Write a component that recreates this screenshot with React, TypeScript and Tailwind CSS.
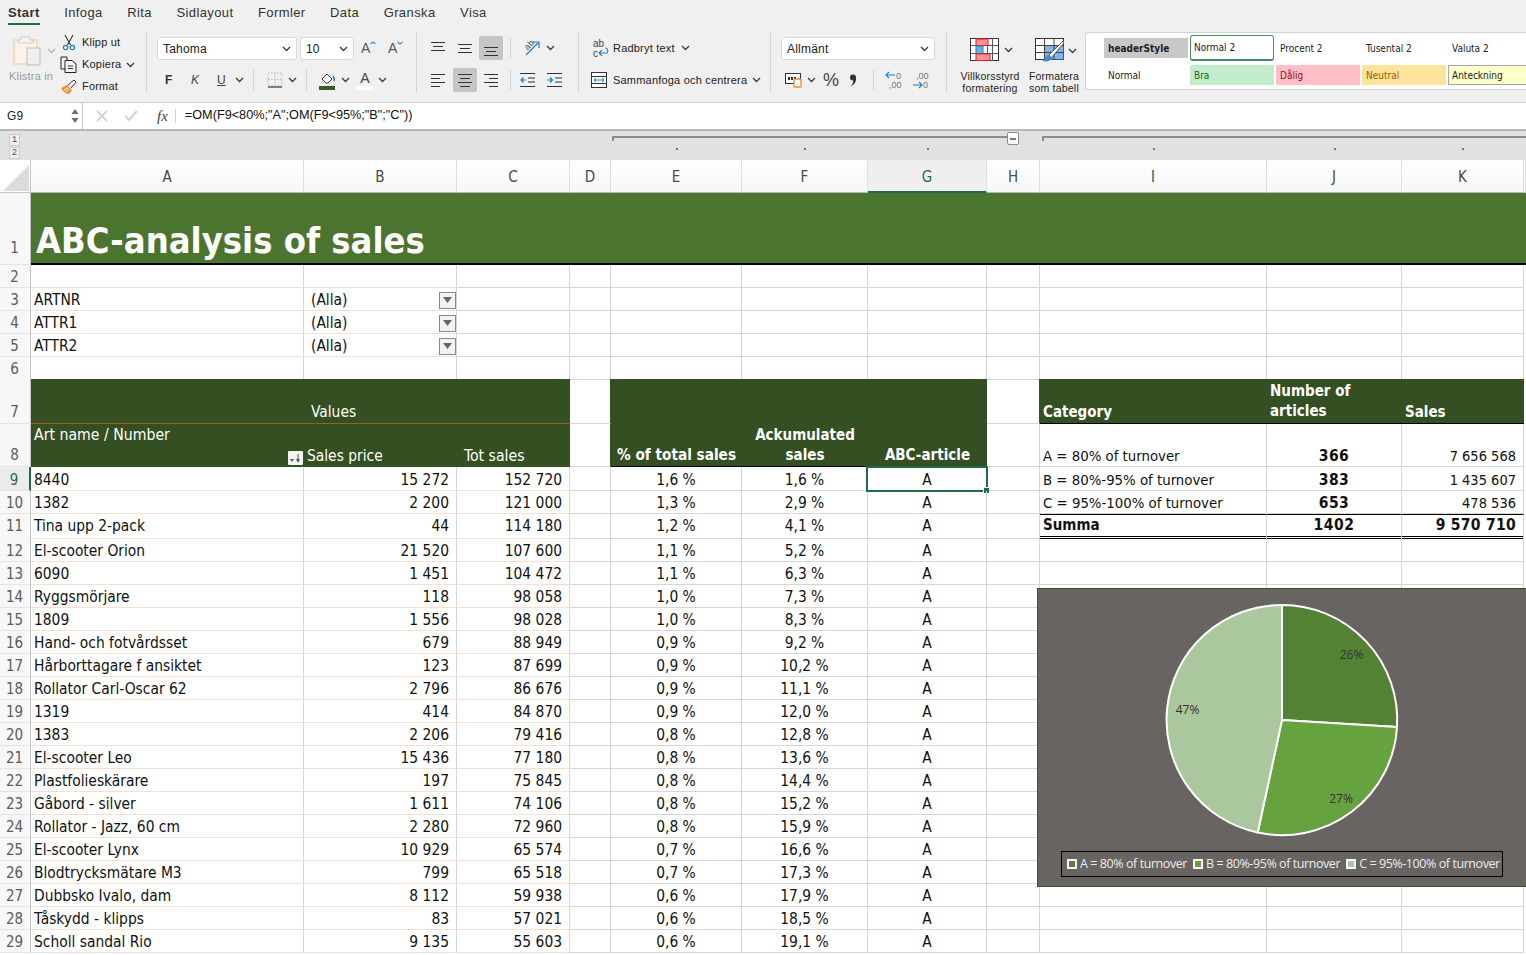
import React from "react";

const COLS = "grid grid-cols-[31px_273px_153px_113px_41px_131px_126px_119px_53px_227px_135px_122px_2px]";
const CELLFONT = "font-['DejaVu_Sans_Condensed','Noto_Sans',sans-serif] text-[15.4px] leading-[20px] text-[#111]";
const UIF = "font-['Liberation_Sans',sans-serif] tracking-[0.2px]";
const UI = `${UIF} text-[#222]`;
const GRID = "border-r border-b border-[#d6d6d6]";
const PEACH = "border-r border-b border-r-[#d6d6d6] border-b-[#f8dfcd]";
const DARK = "bg-[#344f22]";
const HEAD = "text-white font-bold text-[15px]";

const data: [string, string, string, string, string][] = [
  ["8440", "15 272", "152 720", "1,6 %", "1,6 %"],
  ["1382", "2 200", "121 000", "1,3 %", "2,9 %"],
  ["Tina upp 2-pack", "44", "114 180", "1,2 %", "4,1 %"],
  ["El-scooter Orion", "21 520", "107 600", "1,1 %", "5,2 %"],
  ["6090", "1 451", "104 472", "1,1 %", "6,3 %"],
  ["Ryggsmörjare", "118", "98 058", "1,0 %", "7,3 %"],
  ["1809", "1 556", "98 028", "1,0 %", "8,3 %"],
  ["Hand- och fotvårdsset", "679", "88 949", "0,9 %", "9,2 %"],
  ["Hårborttagare f ansiktet", "123", "87 699", "0,9 %", "10,2 %"],
  ["Rollator Carl-Oscar 62", "2 796", "86 676", "0,9 %", "11,1 %"],
  ["1319", "414", "84 870", "0,9 %", "12,0 %"],
  ["1383", "2 206", "79 416", "0,8 %", "12,8 %"],
  ["El-scooter Leo", "15 436", "77 180", "0,8 %", "13,6 %"],
  ["Plastfolieskärare", "197", "75 845", "0,8 %", "14,4 %"],
  ["Gåbord - silver", "1 611", "74 106", "0,8 %", "15,2 %"],
  ["Rollator - Jazz, 60 cm", "2 280", "72 960", "0,8 %", "15,9 %"],
  ["El-scooter Lynx", "10 929", "65 574", "0,7 %", "16,6 %"],
  ["Blodtrycksmätare M3", "799", "65 518", "0,7 %", "17,3 %"],
  ["Dubbsko Ivalo, dam", "8 112", "59 938", "0,6 %", "17,9 %"],
  ["Tåskydd - klipps", "83", "57 021", "0,6 %", "18,5 %"],
  ["Scholl sandal Rio", "9 135", "55 603", "0,6 %", "19,1 %"],
];

const rightTable: Record<number, [string, string, string, boolean]> = {
  9: ["B = 80%-95% of turnover", "383", "1 435 607", false],
  10: ["C = 95%-100% of turnover", "653", "478 536", false],
  11: ["Summa", "1402", "9 570 710", true],
};

function Cell({ c = "", children }: { c?: string; children?: React.ReactNode }) {
  return <div className={`min-w-0 flex whitespace-nowrap ${c}`}>{children}</div>;
}

function RowNum({ n, pos = "items-center pt-[2px]", sel }: { n: number; pos?: string; sel?: boolean }) {
  return (
    <div
      className={`flex justify-center pr-[1px] border-b border-b-[#e4e4e4] font-['DejaVu_Sans_Condensed',sans-serif] text-[15px] ${pos} ${
        sel ? "bg-[#ececec] border-r-2 border-r-[#1f6b45] text-[#1f6b45]" : "bg-[#f7f7f7] border-r border-r-[#c4c4c4] text-[#5c5c5c]"
      }`}
    >
      {n}
    </div>
  );
}

function Chev({ dim }: { dim?: boolean }) {
  return (
    <svg width="9" height="6" viewBox="0 0 9 6" className="shrink-0">
      <path d="M1 1l3.5 3.5L8 1" fill="none" stroke={dim ? "#b5b5b5" : "#3a3a3a"} strokeWidth="1.3" />
    </svg>
  );
}

function Sep({ c = "h-[61px] mt-[6px]" }: { c?: string }) {
  return <div className={`w-px shrink-0 bg-[#d4d4d4] ${c}`} />;
}

function Lines({ kind }: { kind: "top" | "mid" | "bot" | "left" | "center" | "right" }) {
  const y = kind === "top" ? [2, 6, 10] : kind === "mid" ? [4, 8, 12] : kind === "bot" ? [7, 11, 15] : [2, 6, 10, 14];
  const x: [number, number][] =
    kind === "left"
      ? [[0, 14], [0, 9], [0, 14], [0, 9]]
      : kind === "center"
      ? [[0, 14], [2, 12], [0, 14], [2, 12]]
      : kind === "right"
      ? [[0, 14], [5, 14], [0, 14], [5, 14]]
      : [[0, 14], [2, 12], [0, 14]];
  return (
    <svg width="14" height="16" viewBox="0 0 14 16">
      {y.map((v, i) => (
        <path key={i} d={`M${x[i][0]} ${v + 0.5}H${x[i][1]}`} stroke="#333" strokeWidth="1" />
      ))}
    </svg>
  );
}

function ClipIcon() {
  return (
    <svg width="30" height="32" viewBox="0 0 30 32">
      <rect x="1" y="5" width="23" height="24" fill="#fbf3e9" stroke="#f0d8b8" strokeWidth="1.6" />
      <path d="M8 5V2h9v3h3v3H5V5z" fill="#f4f4f4" stroke="#cfcfcf" />
      <rect x="14" y="13" width="13" height="17" fill="#f0f0f0" stroke="#bdbdbd" />
    </svg>
  );
}

function Scissors() {
  return (
    <svg width="14" height="17" viewBox="0 0 14 17">
      <path d="M3 1l5.5 10M11 1L5.5 11" stroke="#333" strokeWidth="1.1" fill="none" />
      <circle cx="3.6" cy="13.5" r="2.2" fill="none" stroke="#1f7fc4" strokeWidth="1.2" />
      <circle cx="10.4" cy="13.5" r="2.2" fill="none" stroke="#1f7fc4" strokeWidth="1.2" />
    </svg>
  );
}

function CopyIcon() {
  return (
    <svg width="17" height="17" viewBox="0 0 17 17">
      <path d="M1 1h6v12H1z" fill="none" stroke="#222" />
      <path d="M5 4.5h7l4 3.5v8.5H5z" fill="#f4f4f4" stroke="#222" />
      <path d="M8 10h5M8 12.5h5" stroke="#333" />
    </svg>
  );
}

function BrushIcon() {
  return (
    <svg width="18" height="16" viewBox="0 0 18 16">
      <path d="M1 9l6-3 5 5-3 4c-2 0-6-2-8-6z" fill="#f0913a" />
      <path d="M7.5 6.5L14 1l2 2-5 6" fill="#fff" stroke="#333" />
      <path d="M4 11l4-2M6 13l3-3" stroke="#fff" />
    </svg>
  );
}

function FontSizeIcon({ down }: { down?: boolean }) {
  return (
    <div className="flex items-start w-[16px] h-[18px]">
      <span className="font-['Liberation_Sans',sans-serif] text-[14px] leading-[18px] text-[#555]">A</span>
      <svg width="6" height="4" viewBox="0 0 6 4" className="mt-[2px]">
        <path d={down ? "M.5 1l2.5 2 2.5-2" : "M.5 3l2.5-2 2.5 2"} fill="none" stroke="#3c8fd0" strokeWidth="1.1" />
      </svg>
    </div>
  );
}

function Ribbon() {
  return (
    <div className="flex h-[76px] bg-[#f0f0f0] items-start">
      {/* clipboard */}
      <div className="flex w-[146px] shrink-0 h-[70px] pt-[9px]">
        <div className="flex flex-col w-[57px] pl-[9px]">
          <div className="flex items-center">
            <div className="ml-[4px]"><ClipIcon /></div>
            <div className="ml-[4px]"><Chev dim /></div>
          </div>
          <div className={`${UIF} text-[11px] text-[#9a9a9a] mt-[1px] whitespace-nowrap`}>Klistra in</div>
        </div>
        <div className="flex flex-col gap-[5px] pl-[3px] mt-[-1px]">
          <div className="flex items-center h-[17px]">
            <div className="w-[22px] pl-[2px]"><Scissors /></div>
            <span className={`${UI} text-[11px]`}>Klipp ut</span>
          </div>
          <div className="flex items-center h-[17px]">
            <div className="w-[22px]"><CopyIcon /></div>
            <span className={`${UI} text-[11px]`}>Kopiera</span>
            <div className="ml-[5px]"><Chev /></div>
          </div>
          <div className="flex items-center h-[17px]">
            <div className="w-[22px]"><BrushIcon /></div>
            <span className={`${UI} text-[11px]`}>Format</span>
          </div>
        </div>
      </div>
      <Sep />
      {/* font */}
      <div className="w-[269px] shrink-0 pl-[10px]">
        <div className="flex items-center h-[32px] mt-[6px]">
          <div className={`w-[140px] h-[23px] mt-[1px] bg-white border border-[#d8d8d8] rounded-[3px] flex items-center justify-between px-[5px] ${UI} text-[12px]`}>
            Tahoma <Chev />
          </div>
          <div className={`ml-[3px] w-[54px] h-[23px] mt-[1px] bg-white border border-[#d8d8d8] rounded-[3px] flex items-center justify-between px-[5px] ${UI} text-[12px]`}>
            10 <Chev />
          </div>
          <div className="ml-[7px]"><FontSizeIcon /></div>
          <div className="ml-[11px]"><FontSizeIcon down /></div>
        </div>
        <div className="flex items-center h-[32px]">
          <span className="ml-[8px] w-[20px] font-['Liberation_Sans',sans-serif] font-bold text-[12px] text-[#333]">F</span>
          <span className="ml-[6px] w-[20px] font-['Liberation_Sans',sans-serif] italic text-[12px] text-[#444]">K</span>
          <span className="ml-[6px] w-[14px] font-['Liberation_Sans',sans-serif] underline text-[12px] text-[#444]">U</span>
          <div className="ml-[4px]"><Chev /></div>
          <div className="ml-[9px] mr-[13px]"><Sep c="h-[20px]" /></div>
          <svg width="16" height="16" viewBox="0 0 16 16">
            <rect x="1" y="1" width="14" height="13" fill="none" stroke="#bbb" strokeDasharray="1.5 1.5" />
            <path d="M8 1v13M1 7.5h14" stroke="#bbb" strokeDasharray="1.5 1.5" />
            <path d="M1 15h14" stroke="#333" strokeWidth="1.2" />
          </svg>
          <div className="ml-[5px]"><Chev /></div>
          <div className="ml-[9px] mr-[12px]"><Sep c="h-[20px]" /></div>
          <svg width="17" height="19" viewBox="0 0 17 19">
            <path d="M3 8l5-5 5 5-4 4H7z" fill="#fff" stroke="#333" />
            <path d="M14 5c1 2 2 3 1 5" fill="none" stroke="#1f7fc4" strokeWidth="1.6" />
            <rect x="0" y="15" width="16" height="4" fill="#3a5a24" />
          </svg>
          <div className="ml-[5px]"><Chev /></div>
          <div className="ml-[7px] relative flex flex-col items-center w-[16px]">
            <span className="font-['Liberation_Sans',sans-serif] text-[14px] leading-[14px] text-[#444]">A</span>
            <div className="w-[16px] h-[4px] bg-white mt-[1px]" />
          </div>
          <div className="ml-[5px]"><Chev /></div>
        </div>
      </div>
      <Sep />
      {/* alignment */}
      <div className="w-[161px] shrink-0 pl-[9px]">
        <div className="flex items-center h-[32px] mt-[6px]">
          <div className="w-[24px] h-[24px] flex items-center justify-center"><Lines kind="top" /></div>
          <div className="ml-[3px] w-[24px] h-[24px] flex items-center justify-center"><Lines kind="mid" /></div>
          <div className="ml-[2px] w-[24px] h-[24px] bg-[#c5c5c5] rounded-[2px] flex items-center justify-center"><Lines kind="bot" /></div>
          <div className="ml-[7px]"><Sep c="h-[20px]" /></div>
          <div className="ml-[12px] relative w-[17px] h-[16px]">
            <span className="absolute left-[1px] top-[0px] rotate-[-45deg] font-['Liberation_Sans',sans-serif] text-[9px] leading-[10px] text-[#555]">ab</span>
            <svg className="absolute left-0 top-0" width="17" height="16" viewBox="0 0 17 16">
              <path d="M3 15L15 3M10 2h6v6" fill="none" stroke="#1f7fc4" strokeWidth="1.2" />
            </svg>
          </div>
          <div className="ml-[6px]"><Chev /></div>
        </div>
        <div className="flex items-center h-[32px]">
          <div className="w-[24px] h-[24px] flex items-center justify-center"><Lines kind="left" /></div>
          <div className="ml-[3px] w-[24px] h-[24px] bg-[#c5c5c5] rounded-[2px] flex items-center justify-center"><Lines kind="center" /></div>
          <div className="ml-[2px] w-[24px] h-[24px] flex items-center justify-center"><Lines kind="right" /></div>
          <div className="ml-[7px]"><Sep c="h-[20px]" /></div>
          {[0, 1].map((i) => (
            <svg key={i} className={i ? "ml-[12px]" : "ml-[9px]"} width="15" height="14" viewBox="0 0 15 14">
              <path d="M0 .5h15M8 5h7M8 9h7M0 13.5h15" stroke="#333" />
              <path d={i ? "M0 7h5M3 4.5L5.5 7 3 9.5" : "M1 7h5M3.5 4.5L1 7l2.5 2.5"} fill="none" stroke="#1f7fc4" strokeWidth="1.2" />
            </svg>
          ))}
        </div>
      </div>
      <Sep />
      {/* wrap */}
      <div className="w-[191px] shrink-0 pl-[13px]">
        <div className="flex items-center h-[32px] mt-[6px]">
          <svg width="18" height="19" viewBox="0 0 18 19">
            <text x="1" y="8" fontSize="10" fontFamily="Liberation Sans" fill="#444">ab</text>
            <text x="1" y="18" fontSize="10" fontFamily="Liberation Sans" fill="#444">c</text>
            <path d="M7 14h8c2-3 0-5-2-5M7 14l3-3M7 14l3 3" fill="none" stroke="#1f7fc4" strokeWidth="1.1" />
          </svg>
          <span className={`ml-[3px] ${UI} text-[11px]`}>Radbryt text</span>
          <div className="ml-[6px]"><Chev /></div>
        </div>
        <div className="flex items-center h-[32px] -ml-px">
          <svg width="16" height="16" viewBox="0 0 16 16">
            <rect x=".5" y=".5" width="15" height="15" fill="#fff" stroke="#333" />
            <path d="M.5 4.5h15M.5 11.5h15" stroke="#333" />
            <path d="M3 8h10M5 6L3 8l2 2M11 6l2 2-2 2" fill="none" stroke="#1f7fc4" />
          </svg>
          <span className={`ml-[6px] ${UI} text-[11px]`}>Sammanfoga och centrera</span>
          <div className="ml-[5px]"><Chev /></div>
        </div>
      </div>
      <Sep />
      {/* number */}
      <div className="w-[175px] shrink-0 pl-[10px]">
        <div className="flex items-center h-[32px] mt-[6px]">
          <div className={`w-[154px] h-[23px] mt-[1px] bg-white border border-[#d8d8d8] rounded-[3px] flex items-center justify-between px-[5px] ${UI} text-[12px]`}>
            Allmänt <Chev />
          </div>
        </div>
        <div className="flex items-center h-[32px]">
          <svg className="ml-[4px]" width="17" height="16" viewBox="0 0 17 16">
            <rect x=".5" y="1.5" width="15" height="10" fill="#fff" stroke="#333" />
            <path d="M3 6.5h8" stroke="#333" strokeDasharray="2 1" strokeWidth="3" />
            <rect x="9" y="7" width="7" height="8" rx="1" fill="#fff" stroke="#ef8a2c" strokeWidth="1.3" />
          </svg>
          <div className="ml-[5px]"><Chev /></div>
          <span className="ml-[7px] font-['Liberation_Sans',sans-serif] text-[18px] leading-none text-[#444]">%</span>
          <svg className="ml-[10px]" width="8" height="13" viewBox="0 0 8 13">
            <circle cx="4" cy="3.5" r="3" fill="#333" />
            <path d="M7 3.5C7.5 8 5 11 1.5 12.5 4 10 4.5 8 4 6z" fill="#333" />
          </svg>
          <div className="ml-[16px]"><Sep c="h-[20px]" /></div>
          <svg className="ml-[11px]" width="18" height="18" viewBox="0 0 18 18">
            <path d="M10 4H1M4 1L1 4l3 3" fill="none" stroke="#1f7fc4" strokeWidth="1.1" />
            <text x="11" y="8" fontSize="9" fontFamily="Liberation Sans" fill="#777">0</text>
            <text x="4" y="17" fontSize="9" fontFamily="Liberation Sans" fill="#777">,00</text>
          </svg>
          <svg className="ml-[9px]" width="18" height="18" viewBox="0 0 18 18">
            <text x="4" y="8" fontSize="9" fontFamily="Liberation Sans" fill="#777">,00</text>
            <path d="M1 14h9M7 11l3 3-3 3" fill="none" stroke="#1f7fc4" strokeWidth="1.1" />
            <text x="11" y="17" fontSize="9" fontFamily="Liberation Sans" fill="#777">0</text>
          </svg>
        </div>
      </div>
      <Sep />
      {/* cond / table */}
      <div className="w-[138px] shrink-0 flex pt-[12px] pl-[10px] gap-[4px]">
        <div className="w-[68px] flex flex-col items-center">
          <div className="flex items-center gap-[5px] pl-[1px]">
            <svg width="29" height="23" viewBox="0 0 29 23">
              <rect x=".5" y=".5" width="28" height="22" fill="#fff" stroke="#333" />
              <path d="M.5 7.5h28M.5 15.5h28M6.5 0v23M17.5 0v23M22.5 0v23" stroke="#555" />
              <rect x="6" y="1" width="12" height="6.5" fill="#ff8f93" stroke="#d9232a" />
              <rect x="6" y="8" width="7" height="7.5" fill="#6cb0e4" stroke="#2e80c0" />
              <rect x="6" y="16" width="14" height="6.5" fill="#ff8f93" stroke="#d9232a" />
            </svg>
            <Chev />
          </div>
          <div className={`${UI} text-[10.5px] leading-[12px] text-center mt-[9px] whitespace-nowrap -ml-[2px]`}>
            Villkorsstyrd<br />formatering
          </div>
        </div>
        <div className="w-[54px] flex flex-col items-center">
          <div className="flex items-center gap-[4px]">
            <svg width="29" height="26" viewBox="0 0 29 26">
              <rect x=".5" y=".5" width="28" height="21" fill="#fff" stroke="#333" />
              <rect x="9.5" y="7.5" width="19" height="14" fill="#7db5e8" stroke="#1866ad" />
              <path d="M.5 7.5h28M.5 14.5h28M9.5 0v22M19 0v22" stroke="#444" />
              <path d="M28 3L14 17l2 3L29 5z" fill="#fff" stroke="#555" />
              <path d="M13 17c-3 1-2 4-6 6 5 1 9 0 10-3z" fill="#3f8ccb" />
            </svg>
            <Chev />
          </div>
          <div className={`${UI} text-[10.5px] leading-[12px] text-center mt-[6px] whitespace-nowrap -ml-[4px]`}>
            Formatera<br />som tabell
          </div>
        </div>
      </div>
      {/* styles gallery */}
      <div className="mt-[6px] flex-1 h-[58px] bg-white border border-[#d2d2d2] border-r-0 rounded-l-[3px] pl-[18px] pt-[5px] font-['DejaVu_Sans_Condensed','Noto_Sans',sans-serif] text-[10px] text-[#222]">
        <div className="grid grid-cols-[84px_84px_84px_84px_84px] gap-x-[2px] gap-y-[7px] grid-rows-[20px_20px]">
          <div className="bg-[#c8c8c8] font-bold flex items-center pl-[4px]">headerStyle</div>
          <div className="border border-[#3e9269] rounded-[3px] bg-white flex items-center pl-[3px] h-[26px] mt-[-3px] border-b-2">Normal 2</div>
          <div className="flex items-center pl-[4px]">Procent 2</div>
          <div className="flex items-center pl-[4px]">Tusental 2</div>
          <div className="flex items-center pl-[4px]">Valuta 2</div>
          <div className="flex items-center pl-[4px]">Normal</div>
          <div className="bg-[#c3eccb] text-[#0f6a1c] flex items-center pl-[4px]">Bra</div>
          <div className="bg-[#ffbfc6] text-[#9c0a1a] flex items-center pl-[4px]">Dålig</div>
          <div className="bg-[#fee49a] text-[#9c5a00] flex items-center pl-[4px]">Neutral</div>
          <div className="bg-[#ffffcc] border border-[#a5a5a5] flex items-center pl-[3px]">Anteckning</div>
        </div>
      </div>
    </div>
  );
}

function FormulaBar() {
  return (
    <div className="flex items-center h-[27px] bg-white border-t border-[#cfcfcf]">
      <div className={`w-[70px] pl-[7px] ${UI} text-[12px]`}>G9</div>
      <svg width="10" height="16" viewBox="0 0 10 16">
        <path d="M5 1l3.5 5h-7zM5 15L1.5 10h7z" fill="#707070" />
      </svg>
      <div className="ml-[2px] w-px h-[26px] bg-[#c8c8c8]" />
      <svg className="ml-[13px]" width="12" height="12" viewBox="0 0 12 12">
        <path d="M1 1l10 10M11 1L1 11" stroke="#d2d2d2" strokeWidth="2" />
      </svg>
      <svg className="ml-[16px]" width="14" height="12" viewBox="0 0 14 12">
        <path d="M1 6l4 4 8-9" fill="none" stroke="#d2d2d2" strokeWidth="2" />
      </svg>
      <span className="ml-[19px] font-['Liberation_Serif',serif] italic text-[15px] text-[#444]">fx</span>
      <div className="ml-[7px] w-px h-[14px] bg-[#d4d4d4]" />
      <span className="ml-[9px] -mt-[1px] font-['Liberation_Sans',sans-serif] text-[12.7px] text-[#111]">=OM(F9&lt;80%;"A";OM(F9&lt;95%;"B";"C"))</span>
    </div>
  );
}

function OutlineBar() {
  const tick = <div className="w-[2px] h-[2px] bg-[#777] mx-auto" />;
  return (
    <div className="h-[31px] bg-[#e1e1e1] border-t-2 border-[#b8b8b8] flex flex-col relative">
      <div className="flex h-[14px] pt-[4px]">
        <div className="w-[395px] ml-[612px] h-[5px] border-t-2 border-l-2 border-[#8c8c8c] mt-[1px]" />
        <div className="w-[12px] h-[13px] border border-[#8c8c8c] rounded-[2px] bg-white flex items-center justify-center mt-[-3px]">
          <div className="w-[6px] h-[2px] bg-[#777]" />
        </div>
        <div className="flex-1 ml-[23px] h-[5px] border-t-2 border-l-2 border-[#8c8c8c] mt-[1px]" />
      </div>
      <div className={`${COLS} h-[8px] items-center`}>
        <div /><div /><div /><div /><div />
        <div>{tick}</div><div>{tick}</div><div>{tick}</div><div />
        <div>{tick}</div><div>{tick}</div><div>{tick}</div><div />
      </div>
      <div className="absolute left-[9px] top-[3px] w-[11px] font-['Liberation_Mono',monospace] text-[9px] leading-[12px] text-[#555] text-center">
        <div className="border border-[#ccc] bg-[#eee] h-[12px] leading-[10px]">1</div>
        <div className="border border-[#ccc] bg-[#eee] h-[12px] leading-[10px] mt-px">2</div>
      </div>
    </div>
  );
}

function ColHeaders() {
  const letters = ["A", "B", "C", "D", "E", "F", "G", "H", "I", "J", "K", ""];
  return (
    <div className={`${COLS} h-[33px]`}>
      <div className="bg-white border-r border-b border-[#c8c8c8] flex items-end justify-end">
        <svg width="28" height="27" viewBox="0 0 28 27">
          <path d="M27 0v26H1z" fill="#dcdcdc" />
        </svg>
      </div>
      {letters.map((l) => (
        <div
          key={l || "x"}
          className={`flex items-center justify-center pt-[3px] font-['DejaVu_Sans_Condensed',sans-serif] text-[15px] border-r border-r-[#dedede] ${
            l === "G"
              ? "bg-[#efefef] text-[#1f6b45] border-b-2 border-b-[#1f6b45]"
              : "bg-gradient-to-b from-white to-[#f7f7f7] text-[#4a4a4a] border-b border-b-[#b5b5b5]"
          }`}
        >
          {l}
        </div>
      ))}
    </div>
  );
}

function Sheet() {
  const tall: Record<number, string> = { 9: "h-[24px]", 10: "h-[23px]", 11: "h-[24px]", 12: "h-[24px]" };
  return (
    <div className={CELLFONT}>
      {/* row 1 */}
      <div className={`${COLS} h-[72px]`}>
        <RowNum n={1} pos="items-end pb-[6px]" />
        <div className="col-span-12 bg-[#4b752e] border-b-2 border-black flex items-end pl-[5px] font-['DejaVu_Sans_Condensed',sans-serif] font-bold text-[36px] leading-[44px] text-white whitespace-nowrap">
          ABC-analysis of sales
        </div>
      </div>
      {/* rows 2-6 */}
      {[2, 3, 4, 5, 6].map((n) => {
        const label: Record<number, string> = { 3: "ARTNR", 4: "ATTR1", 5: "ATTR2" };
        const peach = n >= 2 && n <= 5;
        return (
          <div key={n} className={`${COLS} ${n === 6 ? "h-[22px]" : "h-[23px]"}`}>
            <RowNum n={n} />
            <Cell c={`${peach ? PEACH : GRID} items-center pt-[2px] pl-[3px]`}>{label[n]}</Cell>
            <Cell c={`${peach ? PEACH : GRID} items-center pt-[2px] pl-[7px] justify-between pr-0`}>
              {label[n] && (
                <>
                  <span>(Alla)</span>
                  <span className="w-[17px] h-[17px] border border-[#8a8a8a] bg-[#f2f2f2] flex items-center justify-center">
                    <svg width="9" height="6" viewBox="0 0 9 6"><path d="M0 0h9L4.5 6z" fill="#666" /></svg>
                  </span>
                </>
              )}
            </Cell>
            {Array.from({ length: 9 }).map((_, i) => (
              <Cell key={i} c={GRID} />
            ))}
            <div />
          </div>
        );
      })}
      {/* row 7 */}
      <div className={`${COLS} h-[45px]`}>
        <RowNum n={7} pos="items-end pb-[1px]" />
        <Cell c={`${DARK} border-b border-b-[#a85a1c]`} />
        <Cell c={`${DARK} border-b border-b-[#a85a1c] items-end pl-[7px] pb-[1px] text-white`}>Values</Cell>
        <Cell c={`${DARK} border-b border-b-[#a85a1c]`} />
        <Cell c="border-r border-r-[#344f22] border-b border-b-[#d6d6d6]" />
        <Cell c={DARK} /><Cell c={DARK} /><Cell c={DARK} />
        <Cell c="border-r border-r-[#344f22] border-b border-b-[#d6d6d6]" />
        <Cell c={`${DARK} border-b border-b-black items-end pl-[3px] pb-[1px] ${HEAD}`}>Category</Cell>
        <Cell c={`${DARK} border-b border-b-black items-end pl-[3px] pb-[2px] ${HEAD} whitespace-normal`}>
          <span>Number of<br />articles</span>
        </Cell>
        <Cell c={`${DARK} border-b border-b-black items-end pl-[3px] pb-[1px] ${HEAD}`}>Sales</Cell>
        <div />
      </div>
      {/* row 8 */}
      <div className={`${COLS} h-[43px]`}>
        <RowNum n={8} pos="items-end pb-[1px]" />
        <Cell c={`${DARK} pl-[3px] pt-[1px] text-white justify-between`}>
          <span className="text-[15.7px]">Art name / Number</span>
          <span className="self-end mb-[2px] mr-[1px] w-[15px] h-[14px] bg-[#f4f4f4] rounded-[1px] flex items-center justify-center">
            <svg width="11" height="9" viewBox="0 0 11 9">
              <path d="M0 5h4L2 8zM7.5 0h1v5H10L8 9 6 5h1.5z" fill="#555" />
            </svg>
          </span>
        </Cell>
        <Cell c={`${DARK} items-end pl-[3px] pb-[1px] text-white`}>Sales price</Cell>
        <Cell c={`${DARK} items-end pl-[7px] pb-[1px] text-white text-[15.7px]`}>Tot sales</Cell>
        <Cell c="border-r border-r-[#344f22] border-b border-b-[#d6d6d6]" />
        <Cell c={`${DARK} border-b border-b-black items-end justify-center pb-[1px] text-white font-bold text-[15.2px]`}>% of total sales</Cell>
        <Cell c={`${DARK} border-b border-b-black items-end justify-center pb-[1px] ${HEAD} text-center`}>
          <span>Ackumulated<br />sales</span>
        </Cell>
        <Cell c={`${DARK} border-b border-b-black items-end justify-center pb-[1px] ${HEAD}`}>ABC-article</Cell>
        <Cell c="border-r border-b border-[#d6d6d6]" />
        <Cell c={`${GRID} items-end pl-[3px] text-[14.8px]`}>A = 80% of turnover</Cell>
        <Cell c={`${GRID} items-end justify-center font-bold text-[15.5px] tracking-[0.5px]`}>366</Cell>
        <Cell c={`${GRID} items-end justify-end pr-[7px] text-[14.5px]`}>7 656 568</Cell>
        <div />
      </div>
      {/* data rows */}
      {data.map((d, i) => {
        const n = i + 9;
        const r = rightTable[n];
        const pos = n === 11 ? "items-center pb-[1px]" : "items-center pt-[2px]";
        const lineTop = n === 11 ? "border-t border-t-black" : "";
        const rightBorder = n === 11 ? "border-r border-r-[#d6d6d6] border-b-[3px] border-b-black border-double" : GRID;
        return (
          <div key={n} className={`${COLS} ${tall[n] ?? "h-[23px]"}`}>
            <RowNum n={n} sel={n === 9} pos={pos} />
            <Cell c={`${PEACH} ${pos} pl-[3px]`}>{d[0]}</Cell>
            <Cell c={`${PEACH} ${pos} justify-end pr-[7px]`}>{d[1]}</Cell>
            <Cell c={`${PEACH} ${pos} justify-end pr-[7px]`}>{d[2]}</Cell>
            <Cell c={GRID} />
            <Cell c={`${GRID} ${pos} justify-center`}>{d[3]}</Cell>
            <Cell c={`${GRID} ${pos} justify-center`}>{d[4]}</Cell>
            <Cell c={`${GRID} ${pos} justify-center relative`}>
              A
              {n === 9 && (
                <>
                  <div className="absolute left-[-2px] top-[-1px] right-[-2px] bottom-[-2px] border-2 border-[#1f6b45]" />
                  <div className="absolute right-[-4px] bottom-[-4px] w-[5px] h-[5px] bg-[#1f6b45] border border-white box-content" />
                </>
              )}
            </Cell>
            <Cell c={GRID} />
            {r ? (
              <>
                <Cell c={`${rightBorder} ${lineTop} ${pos} pl-[3px] ${r[3] ? "font-bold text-[15px]" : "text-[14.8px]"}`}>{r[0]}</Cell>
                <Cell c={`${rightBorder} ${lineTop} ${pos} justify-center font-bold text-[15.5px] tracking-[0.5px]`}>{r[1]}</Cell>
                <Cell c={`${rightBorder} ${lineTop} ${pos} justify-end pr-[7px] ${r[3] ? "font-bold text-[15.5px] tracking-[0.3px]" : "text-[14.5px]"}`}>{r[2]}</Cell>
              </>
            ) : (
              <>
                <Cell c={GRID} /><Cell c={GRID} /><Cell c={GRID} />
              </>
            )}
            <div />
          </div>
        );
      })}
    </div>
  );
}

function Legend({ color, label }: { color: string; label: string }) {
  return (
    <div className="flex items-center gap-[3px]">
      <span className={`w-[10px] h-[10px] border-2 border-white ${color}`} />
      <span className="whitespace-nowrap">{label}</span>
    </div>
  );
}

function Chart() {
  return (
    <div className="absolute left-[1037px] top-[588px] w-[490px] h-[299px] bg-[#686462] border border-[#375623] flex flex-col">
      <svg width="488" height="262" viewBox="0 0 488 262" className="shrink-0">
        <g stroke="#fff" strokeWidth="2" strokeLinejoin="round">
          <path d="M244 131L244 16A115 115 0 0 1 359 138Z" fill="#548235" />
          <path d="M244 131L359 138A115 115 0 0 1 219.7 243.5Z" fill="#66a33f" />
          <path d="M244 131L219.7 243.5A115 115 0 0 1 244 16Z" fill="#abc79d" />
        </g>
        <g fontFamily="Open Sans" fontSize="12" fill="#333" textAnchor="middle">
          <text x="313.5" y="70">26%</text>
          <text x="303" y="214">27%</text>
          <text x="149.5" y="125">47%</text>
        </g>
      </svg>
      <div className="ml-[23px] w-[442px] h-[26px] border border-black flex items-center pl-[5px] gap-[6px] font-['Open_Sans',sans-serif] text-[12.5px] tracking-[-0.43px] text-[#ececec]">
        <Legend color="bg-[#548235]" label="A = 80% of turnover" />
        <Legend color="bg-[#66a33f]" label="B = 80%-95% of turnover" />
        <Legend color="bg-[#abc79d]" label="C = 95%-100% of turnover" />
      </div>
    </div>
  );
}

export default function App() {
  return (
    <div className="relative w-[1526px] h-[955px] overflow-hidden bg-white">
      <div className="h-[26px] bg-[#f0f0f0] flex items-start pl-[8px] pt-[5px] gap-[24.5px]">
        {["Start", "Infoga", "Rita", "Sidlayout", "Formler", "Data", "Granska", "Visa"].map((t, i) => (
          <div
            key={t}
            className={`font-['Liberation_Sans',sans-serif] text-[13px] leading-[16px] tracking-[0.4px] text-[#333] ${
              i === 0 ? "font-bold border-b-2 border-[#1f7145] pb-[2px]" : ""
            }`}
          >
            {t}
          </div>
        ))}
      </div>
      <Ribbon />
      <FormulaBar />
      <OutlineBar />
      <ColHeaders />
      <Sheet />
      <Chart />
    </div>
  );
}
